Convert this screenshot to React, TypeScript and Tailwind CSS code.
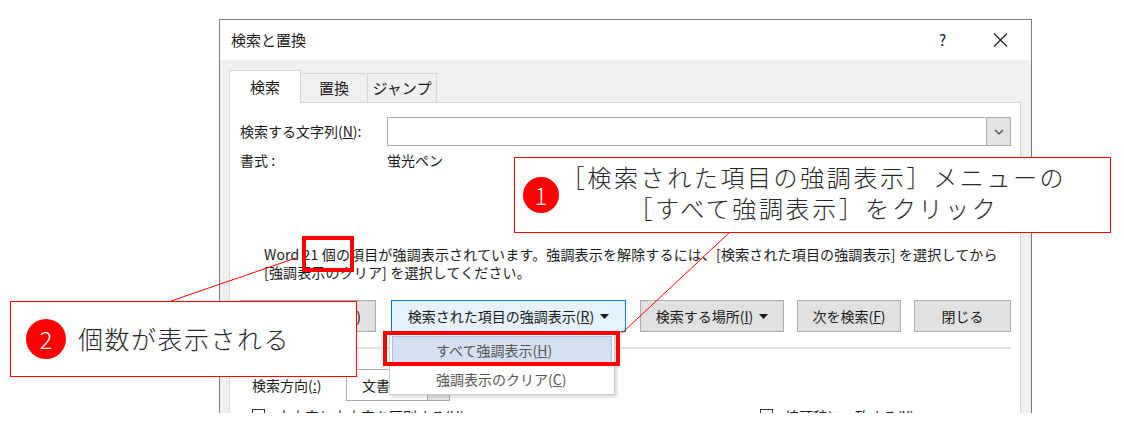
import type { ReactNode } from 'react'

function Caret() {
  return (
    <svg width="9" height="5" viewBox="0 0 9 5" className="ml-[6px] shrink-0">
      <path d="M0 0h9L4.5 5z" fill="#1a1a1a" />
    </svg>
  )
}

function Chevron() {
  return (
    <svg width="10" height="6" viewBox="0 0 10 6">
      <path d="M1 1l4 4 4-4" fill="none" stroke="#444" strokeWidth="1.2" />
    </svg>
  )
}

function Button({ className, children }: { className: string; children: ReactNode }) {
  return (
    <div className={`h-full flex items-center justify-center border ${className}`}>
      {children}
    </div>
  )
}

function Badge({ n, size }: { n: string; size: string }) {
  return (
    <div
      className={`${size} shrink-0 rounded-full bg-[#ff0000] text-white flex items-center justify-center text-[24px] font-light leading-none`}
    >
      {n}
    </div>
  )
}

export default function App() {
  return (
    <div className="relative w-[1124px] h-[442px] overflow-hidden bg-white pt-[19px] font-['Noto_Sans_CJK_JP',sans-serif] text-[#1a1a1a]">
      {/* Dialog */}
      <div className="ml-[219px] w-[813px] h-[394px] overflow-hidden border-x border-t border-[#7a7a7a] bg-[#f0f0f0] flex flex-col">
        {/* Title bar */}
        <div className="h-[40px] shrink-0 bg-white flex items-center pl-[11px] text-[15px]">
          <span className="flex-1">検索と置換</span>
          <span className="mr-[47px] text-[15px]">?</span>
          <svg width="15" height="14" viewBox="0 0 15 14" className="mr-[23px]">
            <path d="M1 0.5l13 13M14 0.5l-13 13" stroke="#1a1a1a" strokeWidth="1.1" />
          </svg>
        </div>

        <div className="flex-1 flex flex-col pl-[9px] pr-[10px] pt-[10px]">
          {/* Tabs */}
          <div className="flex items-end h-[32px] text-[15px]">
            <div className="relative z-10 -mb-px h-[33px] w-[72px] bg-white border border-b-0 border-[#d9d9d9] flex items-center justify-center">
              検索
            </div>
            <div className="h-[29px] w-[67px] border border-l-0 border-b-0 border-[#d9d9d9] flex items-center justify-center">
              置換
            </div>
            <div className="h-[29px] w-[69px] border border-l-0 border-b-0 border-[#d9d9d9] flex items-center justify-center">
              ジャンプ
            </div>
          </div>

          {/* Panel */}
          <div className="flex-1 bg-white border border-b-0 border-[#d9d9d9] pl-[10px] pr-[9px] pt-[14px] text-[14px]">
            <div className="flex items-center h-[29px]">
              <span className="w-[147px]">
                検索する文字列(<u>N</u>):
              </span>
              <div className="flex-1 h-full border border-[#adadad] flex justify-end">
                <div className="w-[24px] h-full bg-[#e3e3e3] border-l border-[#adadad] flex items-center justify-center">
                  <Chevron />
                </div>
              </div>
            </div>

            <div className="mt-[5px] h-[18px] leading-[18px] flex">
              <span className="w-[147px]">書式 :</span>
              <span>蛍光ペン</span>
            </div>

            <div className="mt-[76px] ml-[24px] leading-[18px] tracking-[0.15px]">
              <p>Word 21 個の項目が強調表示されています。強調表示を解除するには、[検索された項目の強調表示] を選択してから</p>
              <p>[強調表示のクリア] を選択してください。</p>
            </div>

            {/* Buttons */}
            <div className="mt-[19px] flex h-[32px]">
              <Button className="w-[136px] bg-[#e1e1e1] border-[#adadad]">&lt;&lt; オプション(<u>L</u>)</Button>
              <Button className="ml-[15px] w-[235px] bg-[#e5f1fb] border-[#0078d7]">
                検索された項目の強調表示(<u>R</u>)
                <Caret />
              </Button>
              <Button className="ml-[14px] w-[144px] bg-[#e1e1e1] border-[#adadad]">
                検索する場所(<u>I</u>)
                <Caret />
              </Button>
              <Button className="ml-[13px] w-[104px] bg-[#e1e1e1] border-[#adadad]">
                次を検索(<u>F</u>)
              </Button>
              <Button className="ml-[13px] w-[97px] bg-[#e1e1e1] border-[#adadad]">閉じる</Button>
            </div>

            <div className="mt-[15px] h-[2px] bg-[#e3e3e3]" />

            {/* Search direction */}
            <div className="mt-[20px] flex items-center h-[32px] pl-[12px]">
              <span className="w-[94px]">
                検索方向(<u>:</u>)
              </span>
              <div className="w-[104px] h-full border border-[#adadad] bg-white flex items-center">
                <span className="flex-1 pl-[15px]">文書全体</span>
                <div className="w-[22px] h-full bg-[#e3e3e3] border-l border-[#adadad] flex items-center justify-center">
                  <Chevron />
                </div>
              </div>
            </div>

            <div className="mt-[7px] flex items-start pl-[12px] h-[20px]">
              <div className="w-[508px] flex items-start">
                <span className="w-[13px] h-[13px] mt-[1px] border border-[#333] bg-white" />
                <span className="ml-[12px] leading-[16px]">大文字と小文字を区別する(<u>H</u>)</span>
              </div>
              <span className="w-[13px] h-[13px] mt-[1px] border border-[#333] bg-white" />
              <span className="ml-[12px] leading-[16px]">接頭辞に一致する(<u>X</u>)</span>
            </div>
          </div>
        </div>
      </div>

      {/* Dropdown menu */}
      <div className="absolute left-[389px] top-[333px] w-[226px] h-[62px] bg-white border border-[#cccccc] shadow-[2px_2px_3px_rgba(0,0,0,0.15)] p-[2px] text-[14px] text-[#555]">
        <div className="h-[29px] bg-[#d5e1f2] border border-[#a9c3e8] flex items-center pl-[43px]">
          すべて強調表示(<u>H</u>)
        </div>
        <div className="h-[29px] flex items-center pl-[44px]">
          強調表示のクリア(<u>C</u>)
        </div>
      </div>

      {/* Red highlight boxes */}
      <div className="absolute left-[383px] top-[331px] w-[237px] h-[35px] border-4 border-[#ff0000]" />
      <div className="absolute left-[302px] top-[236px] w-[52px] h-[36px] border-4 border-[#ff0000]" />

      {/* Leader lines */}
      <svg className="absolute left-0 top-0 pointer-events-none" width="1124" height="442">
        <line x1="729" y1="233" x2="622" y2="333" stroke="#ff0000" strokeWidth="1" />
        <line x1="171" y1="301" x2="296" y2="258" stroke="#ff0000" strokeWidth="1" />
      </svg>

      {/* Callout 1 */}
      <div className="absolute left-[514px] top-[157px] w-[597px] h-[76px] border border-[#ff0000] bg-white flex items-center pl-[8px] pr-[42px]">
        <Badge n="1" size="w-[36px] h-[36px]" />
        <div className="flex-1 flex flex-col items-center pb-[6px] text-[24px] font-light tracking-[2.6px] text-[#262626]">
          <p className="h-[31px] leading-[31px]">［検索された項目の強調表示］メニューの</p>
          <p className="h-[31px] leading-[31px]">［すべて強調表示］をクリック</p>
        </div>
      </div>

      {/* Callout 2 */}
      <div className="absolute left-[10px] top-[301px] w-[347px] h-[76px] border border-[#ff0000] bg-white flex items-center pl-[15px]">
        <Badge n="2" size="w-[40px] h-[40px]" />
        <span className="ml-[12px] text-[25px] font-light tracking-[1.5px] text-[#262626]">個数が表示される</span>
      </div>
    </div>
  )
}
